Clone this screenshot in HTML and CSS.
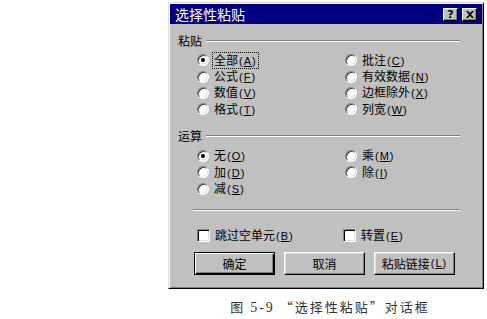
FILE: index.html
```html
<!DOCTYPE html>
<html lang="zh-CN">
<head>
    <meta charset="UTF-8">
    <title>选择性粘贴</title>
    <link rel="stylesheet" href="styles.css">
</head>
<body>

<div class="page">
    <div class="dialog">
        <!-- Title bar -->
        <div class="titlebar">
            <span class="title">选择性粘贴</span>
            <span class="tb-btns">
                <span class="tb-btn">?</span>
                <span class="tb-btn">
                    <svg width="8" height="7" viewBox="0 0 8 7"><path d="M0 0h2l2 2 2-2h2L5 3.5 8 7H6L4 5 2 7H0l3-3.5z" fill="#000"/></svg>
                </span>
            </span>
        </div>

        <div class="body">
            <!-- Paste -->
            <div class="group-head"><span>粘贴</span><i class="rule"></i></div>
            <div class="options rows4">
                <label class="opt"><span class="radio on"></span><span class="txt focus">全部<span class="key">(<u>A</u>)</span></span></label>
                <label class="opt"><span class="radio"></span><span class="txt">公式<span class="key">(<u>F</u>)</span></span></label>
                <label class="opt"><span class="radio"></span><span class="txt">数值<span class="key">(<u>V</u>)</span></span></label>
                <label class="opt"><span class="radio"></span><span class="txt">格式<span class="key">(<u>T</u>)</span></span></label>
                <label class="opt"><span class="radio"></span><span class="txt">批注<span class="key">(<u>C</u>)</span></span></label>
                <label class="opt"><span class="radio"></span><span class="txt">有效数据<span class="key">(<u>N</u>)</span></span></label>
                <label class="opt"><span class="radio"></span><span class="txt">边框除外<span class="key">(<u>X</u>)</span></span></label>
                <label class="opt"><span class="radio"></span><span class="txt">列宽<span class="key">(<u>W</u>)</span></span></label>
            </div>

            <!-- Operation -->
            <div class="group-head op"><span>运算</span><i class="rule"></i></div>
            <div class="options rows3">
                <label class="opt"><span class="radio on"></span><span class="txt">无<span class="key">(<u>O</u>)</span></span></label>
                <label class="opt"><span class="radio"></span><span class="txt">加<span class="key">(<u>D</u>)</span></span></label>
                <label class="opt"><span class="radio"></span><span class="txt">减<span class="key">(<u>S</u>)</span></span></label>
                <label class="opt"><span class="radio"></span><span class="txt">乘<span class="key">(<u>M</u>)</span></span></label>
                <label class="opt"><span class="radio"></span><span class="txt">除<span class="key">(<u>I</u>)</span></span></label>
            </div>

            <div class="sep"></div>

            <div class="checks">
                <label class="opt"><span class="check"></span><span class="txt">跳过空单元<span class="key">(<u>B</u>)</span></span></label>
                <label class="opt"><span class="check"></span><span class="txt">转置<span class="key">(<u>E</u>)</span></span></label>
            </div>

            <div class="buttons">
                <span class="btn default">确定</span>
                <span class="btn">取消</span>
                <span class="btn">粘贴链接<span class="key">(<u>L</u>)</span></span>
            </div>
        </div>
    </div>

    <p class="caption">图 <span class="num">5-9</span> “选择性粘贴”对话框</p>
</div>

</body>
</html>
```

FILE: styles.css
```css
body {
    margin: 0;
    background: #fff;
    font-family: "Noto Sans CJK SC", sans-serif;
}
.page {
    padding: 2px 0 0 168px;
}
.dialog {
    width: 316px;
    height: 287px;
    box-sizing: border-box;
    background: #c0c0c0;
    border: 1px solid;
    border-color: #dfdfdf #000 #000 #dfdfdf;
    box-shadow: inset 1px 1px #fff, inset -1px -1px #808080;
    padding: 1px;
    display: flex;
    flex-direction: column;
}
.titlebar {
    height: 20px;
    background: #000080;
    color: #fff;
    display: flex;
    align-items: center;
    justify-content: space-between;
    padding: 0 5px 0 5px;
}
.title {
    font-size: 14px;
    line-height: 20px;
}
.tb-btns {
    display: flex;
    gap: 4px;
}
.tb-btn {
    width: 15px;
    height: 13px;
    box-sizing: border-box;
    background: #c0c0c0;
    color: #000;
    font: bold 11px/11px "DejaVu Sans", sans-serif;
    display: flex;
    align-items: center;
    justify-content: center;
    border: 1px solid;
    border-color: #fff #000 #000 #fff;
    box-shadow: inset -1px -1px #808080;
}
.body {
    flex: 1;
    padding: 0 22px 0 8px;
    font-size: 12px;
    color: #000;
}
.group-head {
    display: flex;
    align-items: center;
    height: 12px;
    line-height: 12px;
    margin-top: 11px;
}
.group-head.op {
    margin-top: 12px;
}
.rule {
    flex: 1;
    margin-left: 4px;
    border-top: 1px solid #808080;
    border-bottom: 1px solid #fff;
}
.options {
    display: grid;
    grid-auto-flow: column;
    grid-template-columns: 148px 148px;
    padding-left: 19px;
    margin-top: 5px;
}
.rows4 {
    grid-template-rows: repeat(4, 16.4px);
}
.rows3 {
    grid-template-rows: repeat(3, 16.4px);
    margin-top: 6px;
}
.opt {
    display: flex;
    align-items: center;
    line-height: 14px;
    white-space: nowrap;
}
.radio {
    width: 12px;
    height: 12px;
    box-sizing: border-box;
    border-radius: 50%;
    background: #fff;
    border: 1px solid;
    border-color: #808080 #fff #fff #808080;
    box-shadow: inset 1px 1px #404040, inset -1px -1px #dfdfdf;
    margin-right: 3px;
    position: relative;
}
.radio.on::after {
    content: "";
    position: absolute;
    left: 3px;
    top: 3px;
    width: 4px;
    height: 4px;
    border-radius: 50%;
    background: #000;
}
.txt {
    padding: 0 1px;
    border: 1px solid transparent;
}
.txt.focus {
    border: 1px dotted #000;
}
.key {
    letter-spacing: 1px;
    margin-left: 1px;
    font-family: "Liberation Sans", sans-serif;
    font-size: 11px;
}
.sep {
    margin: 12px 0 0 15px;
    border-top: 1px solid #808080;
    border-bottom: 1px solid #fff;
}
.checks {
    display: grid;
    grid-template-columns: 146px 146px;
    padding-left: 19px;
    margin-top: 16px;
    height: 13px;
}
.check {
    width: 13px;
    height: 13px;
    box-sizing: border-box;
    background: #fff;
    border: 1px solid;
    border-color: #808080 #fff #fff #808080;
    box-shadow: inset 1px 1px #000, inset -1px -1px #dfdfdf;
    margin-right: 3px;
}
.buttons {
    display: flex;
    gap: 9px;
    margin: 12px 0 0 16px;
}
.btn {
    width: 81px;
    height: 23px;
    box-sizing: border-box;
    display: flex;
    align-items: center;
    justify-content: center;
    font-size: 12px;
    border: 1px solid;
    border-color: #fff #000 #000 #fff;
    box-shadow: inset -1px -1px #808080, inset 1px 1px #dfdfdf;
}
.btn.default {
    border: 1px solid #000;
    box-shadow: inset 1px 1px #fff, inset -1px -1px #000, inset -2px -2px #808080;
}
.caption {
    width: 316px;
    margin: 10px 0 0 0;
    padding-left: 8px;
    box-sizing: border-box;
    text-align: center;
    font-size: 13px;
    line-height: 16px;
    color: #333;
    letter-spacing: 2px;
}
.num {
    font-family: "Liberation Serif", serif;
    font-size: 14px;
}
```
